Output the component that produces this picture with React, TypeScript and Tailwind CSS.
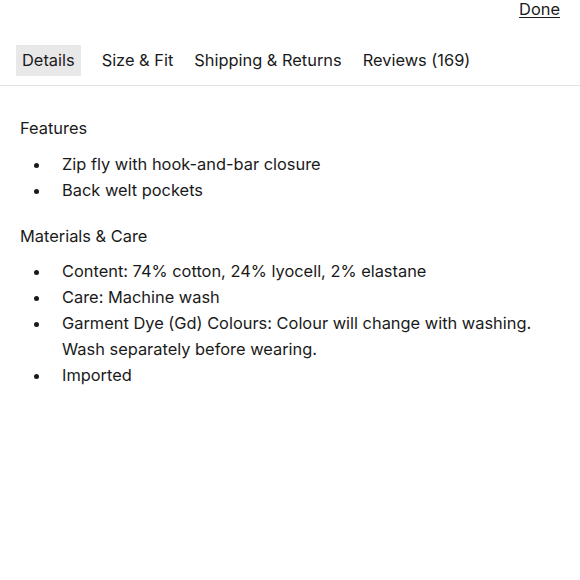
import React from 'react';

const tabs = ['Details', 'Size & Fit', 'Shipping & Returns', 'Reviews (169)'];

const features = ['Zip fly with hook-and-bar closure', 'Back welt pockets'];

const materials = [
  'Content: 74% cotton, 24% lyocell, 2% elastane',
  'Care: Machine wash',
  'Garment Dye (Gd) Colours: Colour will change with washing. Wash separately before wearing.',
  'Imported',
];

const BulletList = ({ items, className }: { items: string[]; className: string }) => (
  <ul className={`flex flex-col ${className}`}>
    {items.map((item) => (
      <li key={item} className="flex leading-[26px]">
        <span className="flex h-[26px] w-[42px] shrink-0 items-center pl-[14px] pt-[3px]">
          <span className="h-[5px] w-[5px] rounded-full bg-[#1a1a1a]" />
        </span>
        <span className="max-w-[480px]">{item}</span>
      </li>
    ))}
  </ul>
);

export default function App() {
  return (
    <div className="h-[580px] w-[580px] bg-white text-[#1a1a1a] text-[16.4px] font-['Inter',sans-serif]">
      <div className="flex justify-end pr-5 pt-px leading-[17px]">
        <button className="underline underline-offset-2">Done</button>
      </div>

      {/* Tabs */}
      <div className="mt-[27px] flex items-center gap-[21px] border-b border-[#e2e2e2] pb-[9px] pl-4">
        {tabs.map((tab, i) => (
          <div
            key={tab}
            className={
              i === 0
                ? 'bg-[#e8e8e8] px-[6px] py-[5px] leading-[21px]'
                : 'py-[5px] leading-[21px]'
            }
          >
            {tab}
          </div>
        ))}
      </div>

      <div className="px-5 pt-[31px]">
        <h3 className="leading-[22px]">Features</h3>
        <BulletList items={features} className="mt-[12px]" />
        <h3 className="mt-[22px] leading-[22px]">Materials &amp; Care</h3>
        <BulletList items={materials} className="mt-[11px]" />
      </div>
    </div>
  );
}
